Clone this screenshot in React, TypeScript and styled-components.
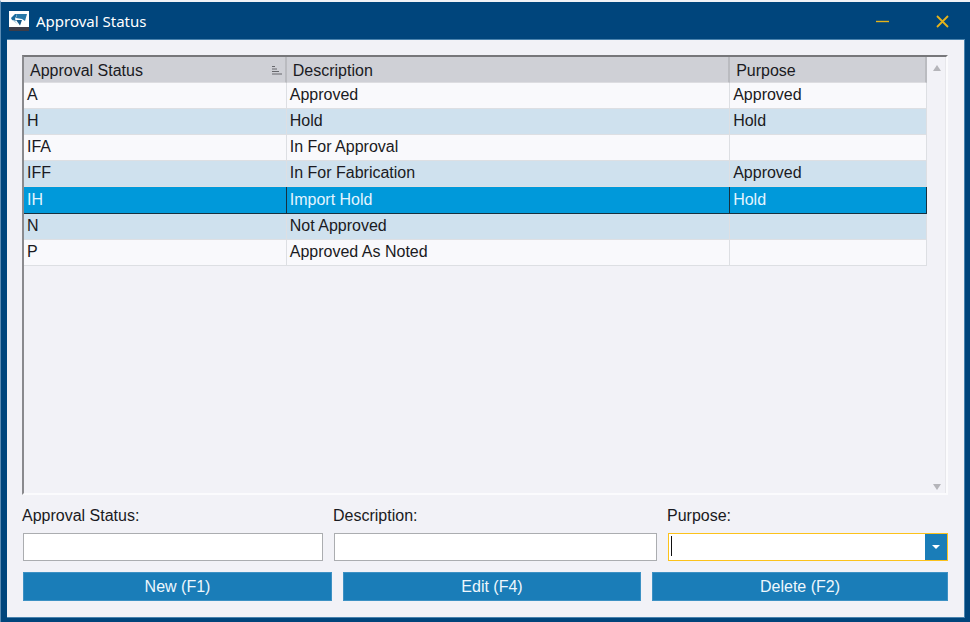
import React, { useState } from "react";
import styled, { createGlobalStyle, css } from "styled-components";

const GlobalStyle = createGlobalStyle`
  * { box-sizing: border-box; }
  body {
    margin: 0;
    background: #f2f2f7;
    color: #1a1a22;
    font: 16px/20px "Liberation Sans", Arial, sans-serif;
  }
  button, input { font: inherit; }
`;

const Window = styled.div`
  display: flex;
  flex-direction: column;
  min-height: 100vh;
  padding: 0 5px 4px 6px;
  background: #00457c;
  border-top: 2px solid #f0f2f6;
  border-left: 1px solid #5b8bb3;
`;

const TitleBar = styled.header`
  display: flex;
  align-items: center;
  height: 37px;
  padding-left: 2px;
  color: #ffffff;
`;

const Title = styled.h1`
  flex: 1;
  margin: 0 0 0 7px;
  font: 400 15px/20px "Noto Sans", "Open Sans", sans-serif;
`;

const WindowButton = styled.button`
  display: grid;
  place-items: center;
  width: 74px;
  height: 37px;
  padding: 1px 0 0;
  border: 0;
  background: transparent;
  color: #e5b31a;

  &:last-child { width: 46px; }
`;

const Panel = styled.main`
  flex: 1;
  display: flex;
  flex-direction: column;
  padding: 15px 16px 16px 15px;
  background: #f2f2f7;
  border: 1px solid #4a83ae;
  border-width: 1px 1px 1px 0;
`;

const ListBox = styled.section`
  flex: 1;
  display: flex;
  border: 2px solid;
  border-color: #77777a #fbfbfd #fbfbfd #8a8a8e;
`;

const Table = styled.table`
  flex: 1;
  align-self: flex-start;
  width: 100%;
  table-layout: fixed;
  border-collapse: separate;
  border-spacing: 0;
`;

const CodeColumn = styled.col`
  width: 29.1%;
`;

const PurposeColumn = styled.col`
  width: 21.8%;
`;

const HeaderCell = styled.th`
  height: 26px;
  padding: 2px 3px 0 6px;
  background: #cfd0d6;
  border-right: 2px solid #babbc0;
  border-bottom: 1px solid #dddde1;
  font-weight: 400;
  text-align: left;
`;

const HeaderContent = styled.div`
  display: flex;
  align-items: center;
  justify-content: space-between;
`;

const Row = styled.tr<{ $selected: boolean }>`
  background: #f9f9fc;
  &:nth-child(even) { background: #cfe1ee; }

  ${({ $selected }) =>
    $selected &&
    css`
      && { background: #0099da; color: #e4f5ff; }
      && td { height: 27px; border-color: #17313f; }
    `}
`;

const Cell = styled.td`
  height: 26px;
  padding: 0 2px 1px 3px;
  border-right: 1px solid #dddfe3;
  border-bottom: 1px solid #dddfe3;
`;

const ScrollTrack = styled.div`
  display: flex;
  flex-direction: column;
  justify-content: space-between;
  width: 19px;
  border-right: 1px solid #e7e7eb;
`;

const ScrollButton = styled.button`
  display: grid;
  place-items: center;
  height: 18px;
  padding: 3px 0 0 2px;
  border: 0;
  background: transparent;
  color: #b5b5ba;

  &:last-child { height: 16px; }
`;

const Fields = styled.form`
  display: grid;
  grid-template-columns: 300fr 323fr 280fr;
  column-gap: 11px;
  margin: 11px 0 0 1px;
`;

const Field = styled.div`
  display: flex;
  flex-direction: column;
  gap: 7px;
  min-width: 0;
`;

const Label = styled.label`
  margin-left: -1px;
`;

const TextInput = styled.input`
  width: 100%;
  height: 28px;
  padding: 0 6px;
  border: 1px solid #abadb0;
  border-radius: 0;
  background: #ffffff;
  outline: none;
`;

const ComboBox = styled.div`
  position: relative;
  display: flex;
  height: 28px;
  border: 1px solid #fcc21b;
  background: #ffffff;
`;

const ComboInput = styled.input`
  flex: 1;
  min-width: 0;
  padding: 0 4px;
  border: 0;
  background: transparent;
  outline: none;
  caret-color: transparent;
`;

const Caret = styled.span`
  position: absolute;
  left: 2px;
  top: 2px;
  width: 1px;
  height: 20px;
  background: #111111;
`;

const ComboButton = styled.button`
  display: grid;
  place-items: center;
  width: 22px;
  padding: 0;
  border: 0;
  background: #1a7db8;
  color: #ffffff;
`;

const Actions = styled.div`
  display: grid;
  grid-template-columns: 309fr 298fr 296fr;
  column-gap: 11px;
  margin: 11px 0 0 1px;
`;

const ActionButton = styled.button`
  height: 29px;
  padding: 0;
  border: 1px solid #3d91c4;
  background: #1a7db8;
  color: #eef7fd;
`;

interface Status {
  code: string;
  description: string;
  purpose: string;
}

const statuses: Status[] = [
  { code: "A", description: "Approved", purpose: "Approved" },
  { code: "H", description: "Hold", purpose: "Hold" },
  { code: "IFA", description: "In For Approval", purpose: "" },
  { code: "IFF", description: "In For Fabrication", purpose: "Approved" },
  { code: "IH", description: "Import Hold", purpose: "Hold" },
  { code: "N", description: "Not Approved", purpose: "" },
  { code: "P", description: "Approved As Noted", purpose: "" },
];

const AppLogo = () => (
  <svg width="20" height="20" viewBox="0 0 20 20" aria-hidden="true">
    <path fill="#fff" d="M0 0h20v16H0z" />
    <path fill="#3c3d49" d="M0 16h20v4H0z" />
    <path fill="#1a6c9f" d="M2 7l4-4h2L6 8l1 2-4-1z" />
    <path fill="#2878a8" d="M8 3h10l-2 7-3-2-6-1z" />
    <path fill="#145888" d="M7 9h6l-2 5.5z" />
    <path fill="#a9cbdf" d="M3 9l3 1 3 3.5z" />
  </svg>
);

const SortIcon = () => (
  <svg width="10" height="9" viewBox="0 0 10 9" aria-hidden="true">
    <path d="M0 .5h3M0 3h5M0 5.5h7M0 8h10" stroke="#66676c" fill="none" />
  </svg>
);

export default function App() {
  const [selected, setSelected] = useState("IH");

  return (
    <>
      <GlobalStyle />
      <Window>
        <TitleBar>
          <AppLogo />
          <Title>Approval Status</Title>
          <WindowButton aria-label="Minimize">
            <svg width="13" height="13" viewBox="0 0 13 13" aria-hidden="true">
              <path d="M0 6.5h13" stroke="currentColor" strokeWidth="1.4" />
            </svg>
          </WindowButton>
          <WindowButton aria-label="Close">
            <svg width="13" height="13" viewBox="0 0 13 13" aria-hidden="true">
              <path d="M1 1l11 11M12 1L1 12" stroke="currentColor" strokeWidth="1.8" />
            </svg>
          </WindowButton>
        </TitleBar>
        <Panel>
          <ListBox>
            <Table>
              <colgroup>
                <CodeColumn />
                <col />
                <PurposeColumn />
              </colgroup>
              <thead>
                <tr>
                  <HeaderCell>
                    <HeaderContent>
                      Approval Status
                      <SortIcon />
                    </HeaderContent>
                  </HeaderCell>
                  <HeaderCell>Description</HeaderCell>
                  <HeaderCell>Purpose</HeaderCell>
                </tr>
              </thead>
              <tbody>
                {statuses.map((s) => (
                  <Row
                    key={s.code}
                    $selected={s.code === selected}
                    onClick={() => setSelected(s.code)}
                  >
                    <Cell>{s.code}</Cell>
                    <Cell>{s.description}</Cell>
                    <Cell>{s.purpose}</Cell>
                  </Row>
                ))}
              </tbody>
            </Table>
            <ScrollTrack>
              <ScrollButton aria-label="Scroll up">
                <svg width="8" height="6" viewBox="0 0 8 6" aria-hidden="true">
                  <path d="M4 0l4 6H0z" fill="currentColor" />
                </svg>
              </ScrollButton>
              <ScrollButton aria-label="Scroll down">
                <svg width="8" height="6" viewBox="0 0 8 6" aria-hidden="true">
                  <path d="M4 6l4-6H0z" fill="currentColor" />
                </svg>
              </ScrollButton>
            </ScrollTrack>
          </ListBox>
          <Fields>
            <Field>
              <Label htmlFor="status">Approval Status:</Label>
              <TextInput id="status" />
            </Field>
            <Field>
              <Label htmlFor="description">Description:</Label>
              <TextInput id="description" />
            </Field>
            <Field>
              <Label htmlFor="purpose">Purpose:</Label>
              <ComboBox>
                <ComboInput id="purpose" role="combobox" aria-expanded={false} />
                <Caret />
                <ComboButton type="button" aria-label="Show purposes">
                  <svg width="8" height="4" viewBox="0 0 8 4" aria-hidden="true">
                    <path d="M0 0h8L4 4z" fill="currentColor" />
                  </svg>
                </ComboButton>
              </ComboBox>
            </Field>
          </Fields>
          <Actions>
            <ActionButton type="button">New (F1)</ActionButton>
            <ActionButton type="button">Edit (F4)</ActionButton>
            <ActionButton type="button">Delete (F2)</ActionButton>
          </Actions>
        </Panel>
      </Window>
    </>
  );
}
